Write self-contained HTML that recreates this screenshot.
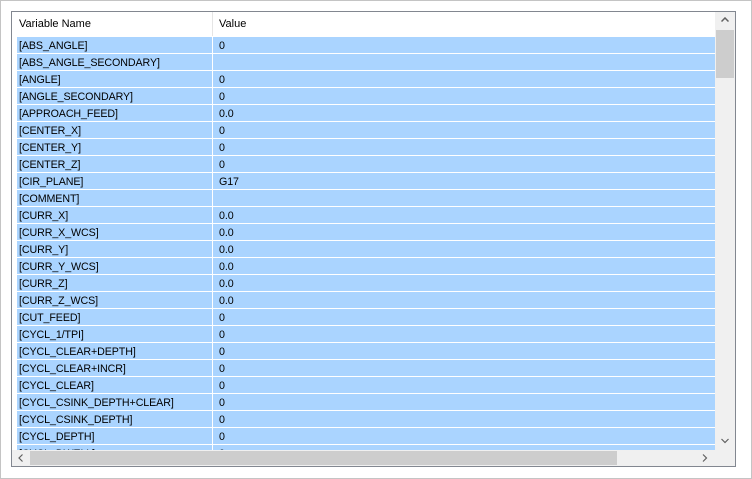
<!DOCTYPE html><html><head><style>
body{margin:0;width:752px;height:479px;background:#fff;position:relative;overflow:hidden;font-family:"Liberation Sans",sans-serif;font-size:11px;color:#000}
.outer{position:absolute;left:0;top:0;width:750px;height:477px;border:1px solid #c4c4c4;background:#fff}
.lv{position:absolute;left:11px;top:11px;width:723px;height:454px;border:1px solid #828790;background:#fff;overflow:hidden}
.hdr{position:absolute;left:0;top:0;height:24px;width:703px}
.hdr span{position:absolute;top:6px}
.hsep{position:absolute;left:200px;top:0;width:1px;height:24px;background:#e5e5e5}
.rows{position:absolute;left:5px;top:25px;width:698px}
.r{height:16px;margin-bottom:1px;background:#aad4ff;position:relative}
.r span{position:absolute;top:3px;left:2px;white-space:nowrap;font-size:10.7px;letter-spacing:-0.1px}
.r span.v{left:202px}
.r:after{content:"";position:absolute;left:195px;top:0;width:1px;height:16px;background:#fff}
.vs{position:absolute;left:703px;top:0;width:20px;height:438px;background:#f0f0f0}
.vt{position:absolute;left:1px;top:18px;width:18px;height:48px;background:#cdcdcd}
.hs{position:absolute;left:0;top:438px;width:703px;height:16px;background:#f0f0f0}
.ht{position:absolute;left:18px;top:1px;width:587px;height:14px;background:#cdcdcd}
.corner{position:absolute;left:703px;top:438px;width:20px;height:16px;background:#f0f0f0}
</style></head><body>
<div class="outer"></div>
<div class="lv">
<div class="hdr"><span style="left:7px">Variable Name</span><div class="hsep"></div><span style="left:207px">Value</span></div>
<div class="rows">
<div class="r"><span>[ABS_ANGLE]</span><span class="v">0</span></div>
<div class="r"><span>[ABS_ANGLE_SECONDARY]</span><span class="v"></span></div>
<div class="r"><span>[ANGLE]</span><span class="v">0</span></div>
<div class="r"><span>[ANGLE_SECONDARY]</span><span class="v">0</span></div>
<div class="r"><span>[APPROACH_FEED]</span><span class="v">0.0</span></div>
<div class="r"><span>[CENTER_X]</span><span class="v">0</span></div>
<div class="r"><span>[CENTER_Y]</span><span class="v">0</span></div>
<div class="r"><span>[CENTER_Z]</span><span class="v">0</span></div>
<div class="r"><span>[CIR_PLANE]</span><span class="v">G17</span></div>
<div class="r"><span>[COMMENT]</span><span class="v"></span></div>
<div class="r"><span>[CURR_X]</span><span class="v">0.0</span></div>
<div class="r"><span>[CURR_X_WCS]</span><span class="v">0.0</span></div>
<div class="r"><span>[CURR_Y]</span><span class="v">0.0</span></div>
<div class="r"><span>[CURR_Y_WCS]</span><span class="v">0.0</span></div>
<div class="r"><span>[CURR_Z]</span><span class="v">0.0</span></div>
<div class="r"><span>[CURR_Z_WCS]</span><span class="v">0.0</span></div>
<div class="r"><span>[CUT_FEED]</span><span class="v">0</span></div>
<div class="r"><span>[CYCL_1/TPI]</span><span class="v">0</span></div>
<div class="r"><span>[CYCL_CLEAR+DEPTH]</span><span class="v">0</span></div>
<div class="r"><span>[CYCL_CLEAR+INCR]</span><span class="v">0</span></div>
<div class="r"><span>[CYCL_CLEAR]</span><span class="v">0</span></div>
<div class="r"><span>[CYCL_CSINK_DEPTH+CLEAR]</span><span class="v">0</span></div>
<div class="r"><span>[CYCL_CSINK_DEPTH]</span><span class="v">0</span></div>
<div class="r"><span>[CYCL_DEPTH]</span><span class="v">0</span></div>
<div class="r"><span>[CYCL_DWELL]</span><span class="v">0</span></div>
</div>
<div class="vs"><div class="vt"></div>
<svg style="position:absolute;left:6px;top:5px" width="8" height="6"><path d="M0.5 4.5L4 1L7.5 4.5" stroke="#606060" stroke-width="1.5" fill="none"/></svg>
<svg style="position:absolute;left:6px;top:426px" width="8" height="6"><path d="M0.5 1L4 4.5L7.5 1" stroke="#606060" stroke-width="1.2" fill="none"/></svg>
</div>
<div class="hs"><div class="ht"></div>
<svg style="position:absolute;left:6px;top:4px" width="6" height="8"><path d="M4.5 0.5L1 4L4.5 7.5" stroke="#606060" stroke-width="1.2" fill="none"/></svg>
<svg style="position:absolute;left:690px;top:4px" width="6" height="8"><path d="M1 0.5L4.5 4L1 7.5" stroke="#606060" stroke-width="1.2" fill="none"/></svg>
</div>
<div class="corner"></div>
</div>
</body></html>
